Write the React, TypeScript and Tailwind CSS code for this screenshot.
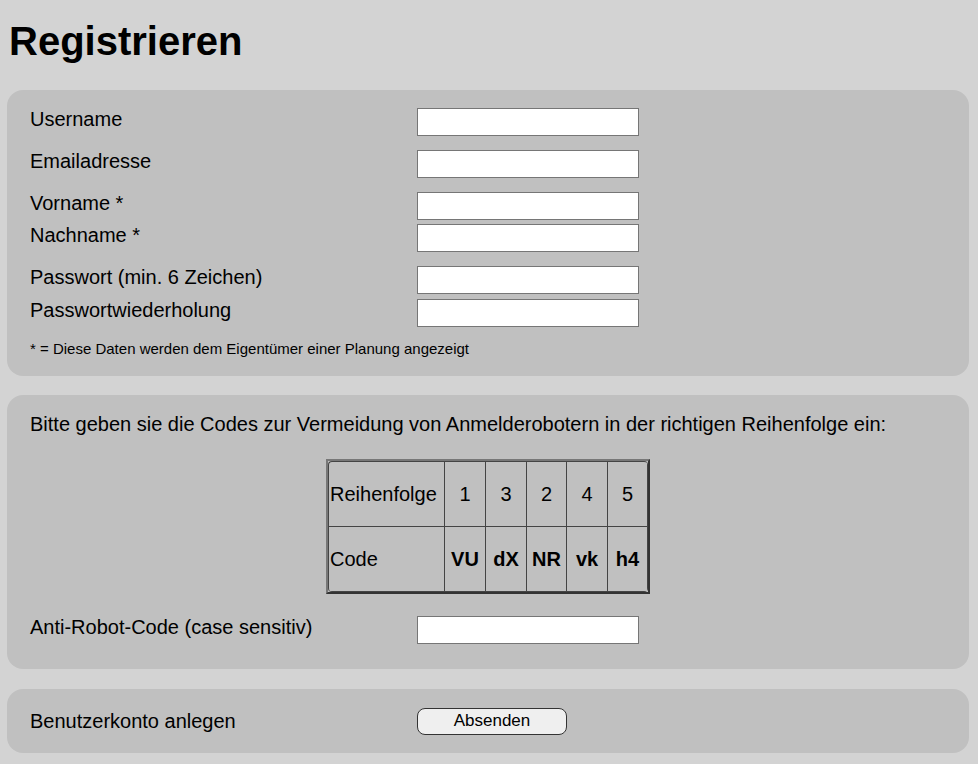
import { ReactNode } from 'react'

const font = { fontFamily: '"Liberation Sans", Arial, sans-serif' }

function Field({ label, className = '' }: { label: string; className?: string }) {
  return (
    <div className={`flex items-start ${className}`}>
      <label className="w-[387px] text-[20px] leading-[23px]">{label}</label>
      <input
        type="text"
        className="h-[28px] w-[222px] border border-[#767676] bg-white px-1 text-[16px] outline-none"
      />
    </div>
  )
}

function Panel({ children, className = '' }: { children: ReactNode; className?: string }) {
  return <div className={`ml-[7px] mr-[9px] rounded-[16px] bg-[#c0c0c0] pl-[23px] ${className}`}>{children}</div>
}

const order = ['1', '3', '2', '4', '5']
const codes = ['VU', 'dX', 'NR', 'vk', 'h4']
const widths = ['w-[41px]', 'w-[41px]', 'w-[40px]', 'w-[41px]', 'w-[40px]']

export default function App() {
  return (
    <div className="min-h-[764px] bg-[#d3d3d3] pb-[12px] text-black" style={font}>
      <h1 className="ml-[9px] pt-[18px] pb-[26px] text-[40px] font-bold leading-[46px]">Registrieren</h1>

      <Panel className="pt-[18px] pb-[19px]">
        <Field label="Username" />
        <Field label="Emailadresse" className="mt-[14px]" />
        <Field label="Vorname *" className="mt-[14px]" />
        <Field label="Nachname *" className="mt-[4px]" />
        <Field label="Passwort (min. 6 Zeichen)" className="mt-[14px]" />
        <Field label="Passwortwiederholung" className="mt-[5px]" />
        <p className="mt-[13px] text-[15px] leading-[17px]">* = Diese Daten werden dem Eigentümer einer Planung angezeigt</p>
      </Panel>

      <Panel className="mt-[19px] pt-[18px] pb-[25px]">
        <p className="text-[20px] leading-[23px]">
          Bitte geben sie die Codes zur Vermeidung von Anmelderobotern in der richtigen Reihenfolge ein:
        </p>
        <div className="mt-[23px] mr-[23px] flex justify-center">
          <div className="border-2 border-t-[#777] border-l-[#777] border-b-[#333] border-r-[#333]">
            <div className="overflow-hidden rounded-[4px] border-l border-t border-[#444] text-[20px]">
              <div className="flex h-[65px]">
                <div className="flex w-[116px] items-center border-b border-r border-[#444] pl-px">Reihenfolge</div>
                {order.map((n, i) => (
                  <div key={i} className={`flex ${widths[i]} items-center justify-center border-b border-r border-[#444]`}>
                    {n}
                  </div>
                ))}
              </div>
              <div className="flex h-[65px]">
                <div className="flex w-[116px] items-center border-b border-r border-[#444] pl-px">Code</div>
                {codes.map((c, i) => (
                  <div key={i} className={`flex ${widths[i]} items-center justify-center border-b border-r border-[#444] font-bold`}>
                    {c}
                  </div>
                ))}
              </div>
            </div>
          </div>
        </div>
        <Field label="Anti-Robot-Code (case sensitiv)" className="mt-[22px]" />
      </Panel>

      <Panel className="mt-[20px] flex h-[64px] items-center">
        <span className="w-[387px] text-[20px] leading-[23px]">Benutzerkonto anlegen</span>
        <button className="h-[27px] w-[150px] rounded-[8px] border border-[#333] bg-[#efefef] text-[17px] leading-[20px]">
          Absenden
        </button>
      </Panel>
    </div>
  )
}
